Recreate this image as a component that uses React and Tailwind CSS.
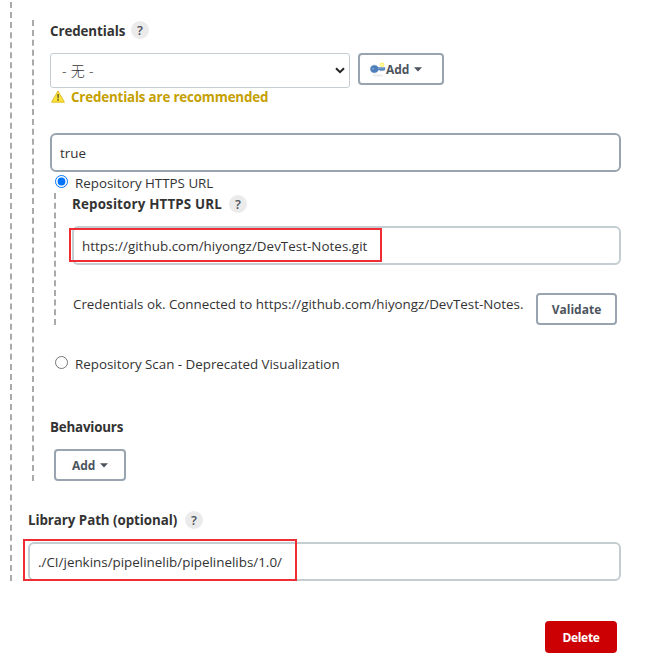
function Help() {
  return (
    <span className="flex h-[18px] w-[18px] shrink-0 items-center justify-center rounded-full bg-[#ebebeb] pt-px text-[13px] font-semibold leading-none text-[#4d545d]">
      ?
    </span>
  );
}

function Caret() {
  return (
    <svg viewBox="0 0 8 5" className="-mt-px h-[5px] w-[8px] shrink-0" fill="#4d545d">
      <path d="M0 .3h8L4 4.6z" />
    </svg>
  );
}

function KeyIcon() {
  return (
    <svg viewBox="0 0 16 16" className="h-4 w-4 shrink-0">
      <ellipse cx="8" cy="13.5" rx="5.500" ry="0.9" fill="#e9e9e9" />
      <circle cx="12" cy="2.8" r="2.3" fill="#fff36b" />
      <circle cx="12" cy="2.8" r="0.9" fill="#fffde0" />
      <path
        d="M4.300 3.200c2 0 3.400 1 4 2.300H15v2.600h-1.200l-.8.9-1-.9-1.100.9-1-.9H8.300c-.6 1.700-2 2.700-4 2.700C2 10.800.4 9.200.4 7S2 3.200 4.300 3.200z"
        fill="#4f7fba"
        stroke="#5b86bb"
        strokeWidth="0.4"
      />
      <path d="M7.500 6.700h7" stroke="#8fb2da" strokeWidth="0.6" />
      <circle cx="3" cy="6.800" r="0.8" fill="#9ebbdd" />
    </svg>
  );
}

function WarningIcon() {
  return (
    <svg viewBox="0 0 14 13" className="-mt-0.5 h-[13px] w-[14px] shrink-0">
      <path d="M7 .9 13.400 12.200H.6z" fill="#fbe337" stroke="#dfb81b" strokeWidth="0.9" strokeLinejoin="round" />
      <path d="M6.200 4.300h1.700l-.3 4.100H6.500zM6.300 9.200h1.500v1.500H6.300z" fill="#5c5128" />
    </svg>
  );
}

const button =
  "flex h-8 shrink-0 items-center rounded-[4px] border-2 border-[#98a4af] pt-0.5 text-[12px] font-bold text-[#4d545d]";
const field = "flex h-[39px] items-center rounded-[6px] border-2 pl-2 text-[13.4px]";
const rail = "shrink-0 border-l-2 border-dashed border-[#aaa]";

export default function App() {
  return (
    <main className="h-[665px] w-[647px] overflow-hidden whitespace-nowrap bg-white font-['Open_Sans','Noto_Sans_CJK_SC',sans-serif] text-[13.35px] leading-[18px] text-[#333]">
      <div className="flex h-[581px] pl-[10px] pt-0.5">
        <div className={rail} />
        <div className="w-[609px] pt-[18px]">
          <section className="ml-5 flex h-[461px]">
            <div className={rail} />
            <div className="w-[587px] pl-4">
              <div className="mt-px flex h-[18px] items-center gap-[7px]">
                <span className="w-[74px] pt-0.5 font-bold tracking-[-0.08px]">Credentials</span>
                <Help />
              </div>
              <div className="mt-[14px] flex h-[35px] gap-2">
                <div className="flex w-[300px] items-center justify-between rounded-[3px] border border-[#c3cdd2] pl-[11px] pr-1">
                  <span className="text-[14px] font-light tracking-[0.3px]">- 无 -</span>
                  <svg viewBox="0 0 10 7" className="h-[7px] w-[10px]" fill="none" stroke="#222" strokeWidth="2">
                    <path d="m1 1.200 4 4 4-4" />
                  </svg>
                </div>
                <div className={button + " w-[86px] pl-[10px]"}>
                  <KeyIcon />
                  <span className="mr-[5px]">Add</span>
                  <Caret />
                </div>
              </div>
              <div className="flex h-[18px] items-center gap-[6px] pl-px text-[#c4a000]">
                <WarningIcon />
                <span className="-mt-px font-bold tracking-[-0.17px]">Credentials are recommended</span>
              </div>
              <div className={field + " mt-[27px] w-[571px] border-[#98a4af]"}>true</div>
              <div className="flex h-[21px] items-start pl-[5px]">
                <input type="radio" name="mode" defaultChecked className="mt-[3px] h-[13px] w-[13px]" />
                <span className="ml-[7px] mt-0.5">Repository HTTPS URL</span>
              </div>
              <div className="ml-1 flex h-[132px]">
                <div className={rail} />
                <div className="w-[565px] pl-4">
                  <div className="mt-0.5 flex h-[18px] items-center gap-[7px]">
                    <span className="w-[150px] font-bold tracking-[0.17px]">Repository HTTPS URL</span>
                    <Help />
                  </div>
                  <div className="relative mt-[13px]">
                    <div className={field + " w-[549px] border-[#c3cdd2] tracking-[0.03px]"}>
                      https://github.com/hiyongz/DevTest-Notes.git
                    </div>
                    <div className="absolute -left-[3px] top-0.5 h-[34px] w-[313px] border-2 border-[#ef2d35]" />
                  </div>
                  <div className="mt-7 flex h-8 pl-px">
                    <span className="w-[463px] pt-0.5">
                      Credentials ok. Connected to https://github.com/hiyongz/DevTest-Notes.
                    </span>
                    <div className={button + " w-[81px] justify-center"}>Validate</div>
                  </div>
                </div>
              </div>
              <div className="mt-[31px] flex h-[18px] items-start pl-[5px]">
                <input type="radio" name="mode" className="h-[13px] w-[13px]" />
                <span className="-mt-px ml-[7px]">Repository Scan - Deprecated Visualization</span>
              </div>
              <div className="mt-[44px] h-[18px] font-bold tracking-[-0.2px]">Behaviours</div>
              <div className={button + " ml-1 mt-[13px] w-[72px] gap-[5px] pl-4"}>
                <span>Add</span>
                <Caret />
              </div>
            </div>
          </section>
          <section className="pl-4 pt-[30px]">
            <div className="flex h-[18px] items-center gap-2">
              <span className="w-[149px] font-bold tracking-[-0.06px]">Library Path (optional)</span>
              <Help />
            </div>
            <div className="relative mt-[13px]">
              <div className={field + " w-[593px] border-[#c3cdd2]"}>./CI/jenkins/pipelinelib/pipelinelibs/1.0/</div>
              <div className="absolute -left-[5px] -top-[3px] h-[42px] w-[274px] border-2 border-[#ef2d35]" />
            </div>
          </section>
        </div>
      </div>
      <div className="mt-10 flex justify-end pr-[30px]">
        <div className="flex h-8 w-[72px] items-center justify-center rounded-[4px] bg-[#cc0003] pt-0.5 text-[12px] font-bold tracking-[-0.3px] text-white">
          Delete
        </div>
      </div>
    </main>
  );
}
